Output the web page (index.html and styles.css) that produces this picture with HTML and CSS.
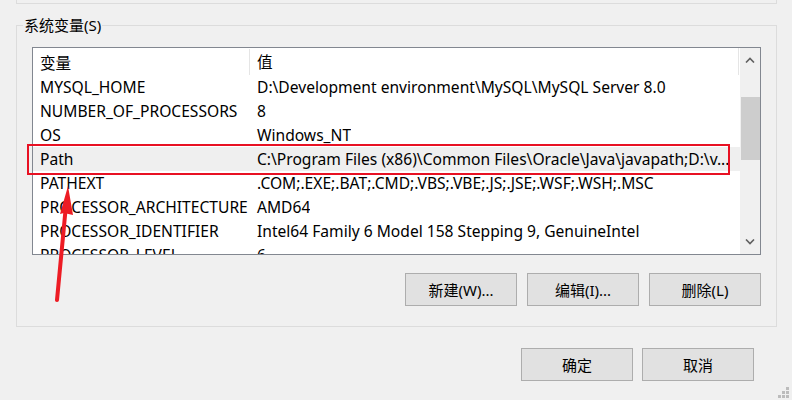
FILE: index.html
```html
<!DOCTYPE html>
<html lang="zh-CN">
<head>
  <meta charset="UTF-8">
  <title>环境变量</title>
  <link rel="stylesheet" href="styles.css">
</head>
<body>
  <div class="user-box"></div>

  <fieldset class="group">
    <legend>系统变量(S)</legend>
    <div class="list">
      <div class="list-body">
        <div class="list-head">
          <span class="col-name">变量</span>
          <span class="col-value">值</span>
        </div>
        <div class="row"><span class="col-name">MYSQL_HOME</span><span class="col-value">D:\Development environment\MySQL\MySQL Server 8.0</span></div>
        <div class="row"><span class="col-name">NUMBER_OF_PROCESSORS</span><span class="col-value">8</span></div>
        <div class="row"><span class="col-name">OS</span><span class="col-value">Windows_NT</span></div>
        <div class="row selected"><span class="col-name">Path</span><span class="col-value">C:\Program Files (x86)\Common Files\Oracle\Java\javapath;D:\v...</span></div>
        <div class="row"><span class="col-name">PATHEXT</span><span class="col-value">.COM;.EXE;.BAT;.CMD;.VBS;.VBE;.JS;.JSE;.WSF;.WSH;.MSC</span></div>
        <div class="row"><span class="col-name">PROCESSOR_ARCHITECTURE</span><span class="col-value">AMD64</span></div>
        <div class="row"><span class="col-name">PROCESSOR_IDENTIFIER</span><span class="col-value">Intel64 Family 6 Model 158 Stepping 9, GenuineIntel</span></div>
        <div class="row"><span class="col-name">PROCESSOR_LEVEL</span><span class="col-value">6</span></div>
      </div>
      <div class="scrollbar">
        <span class="sb-arrow">
          <svg width="10" height="6" viewBox="0 0 10 6"><polyline points="1,5.5 5,1.5 9,5.5" fill="none" stroke="#606060" stroke-width="1.6"/></svg>
        </span>
        <span class="sb-thumb"></span>
        <span class="sb-track"></span>
        <span class="sb-arrow">
          <svg width="10" height="6" viewBox="0 0 10 6"><polyline points="1,0.5 5,4.5 9,0.5" fill="none" stroke="#606060" stroke-width="1.6"/></svg>
        </span>
      </div>
    </div>
    <div class="group-buttons">
      <button class="win-btn">新建(W)...</button>
      <button class="win-btn">编辑(I)...</button>
      <button class="win-btn">删除(L)</button>
    </div>
  </fieldset>

  <div class="dialog-buttons">
    <button class="win-btn">确定</button>
    <button class="win-btn">取消</button>
  </div>

  <!-- annotation drawn over the dialog -->
  <div class="mark-box"></div>
  <svg class="mark-arrow" width="792" height="400" viewBox="0 0 792 400">
    <line x1="57" y1="300" x2="66" y2="205" stroke="#ed1c24" stroke-width="4" stroke-linecap="round"/>
    <polygon points="68,186 60,214 64,213 73,215" fill="#ed1c24"/>
  </svg>

  <div class="grip">
    <i></i><i></i><i class="on"></i>
    <i></i><i class="on"></i><i class="on"></i>
    <i class="on"></i><i class="on"></i><i class="on"></i>
  </div>
</body>
</html>
```

FILE: styles.css
```css
*{box-sizing:border-box}
body{margin:0;width:792px;height:400px;overflow:hidden;position:relative;background:#f0f0f0;color:#000;font-family:"Segoe UI","Noto Sans","Noto Sans CJK SC",sans-serif;font-size:15px}

.user-box{height:4px;margin:0 15px 0 16px;border:1px solid #dcdcdc;border-top:none}

.group{margin:11px 15px 0 16px;padding:11px 15px 20px 15px;border:1px solid #dcdcdc;min-width:0}
.group legend{margin-left:-9px;padding:0 1px;line-height:21px;height:21px}

.list{display:flex;height:208px;border:1px solid #828790;background:#fff;font-size:15.6px}
.list-body{flex:1;overflow:hidden}
.list-head,.row{display:flex;align-items:center;white-space:nowrap}
.list-head{height:27px;border-right:1px solid #e5e5e5;margin-right:1px}
.list-head .col-name{border-right:1px solid #e5e5e5;height:26px;align-self:flex-start;margin-top:1px;display:flex;align-items:center}
.row{height:24px}
.row.selected{background:#efefef}
.col-name{width:217px;padding-left:7px;flex-shrink:0}
.col-value{padding-left:7px;overflow:hidden}

.scrollbar{width:20px;background:#f0f0f0;display:flex;flex-direction:column}
.sb-arrow{height:24px;display:flex;align-items:center;justify-content:center;flex-shrink:0}
.sb-thumb{margin-top:25px;height:63px;margin-left:1px;background:#cdcdcd;flex-shrink:0}
.sb-track{flex:1}

.win-btn{width:112px;height:33px;padding:0;background:#e1e1e1;border:1px solid #adadad;border-radius:0;font:inherit;color:#000}
.group-buttons{display:flex;justify-content:flex-end;gap:10px;margin-top:18px}
.dialog-buttons{display:flex;justify-content:flex-end;gap:9px;margin-top:21px;padding-right:38px}

.mark-box{position:absolute;left:27px;top:144px;width:703px;height:31px;border:2px solid #e81123}
.mark-arrow{position:absolute;left:0;top:0;pointer-events:none}

.grip{position:absolute;right:3px;bottom:2px;display:grid;grid-template-columns:repeat(3,3px);grid-auto-rows:3px;gap:1px}
.grip i{display:block}
.grip i.on{background:#bcbcbc}
```
